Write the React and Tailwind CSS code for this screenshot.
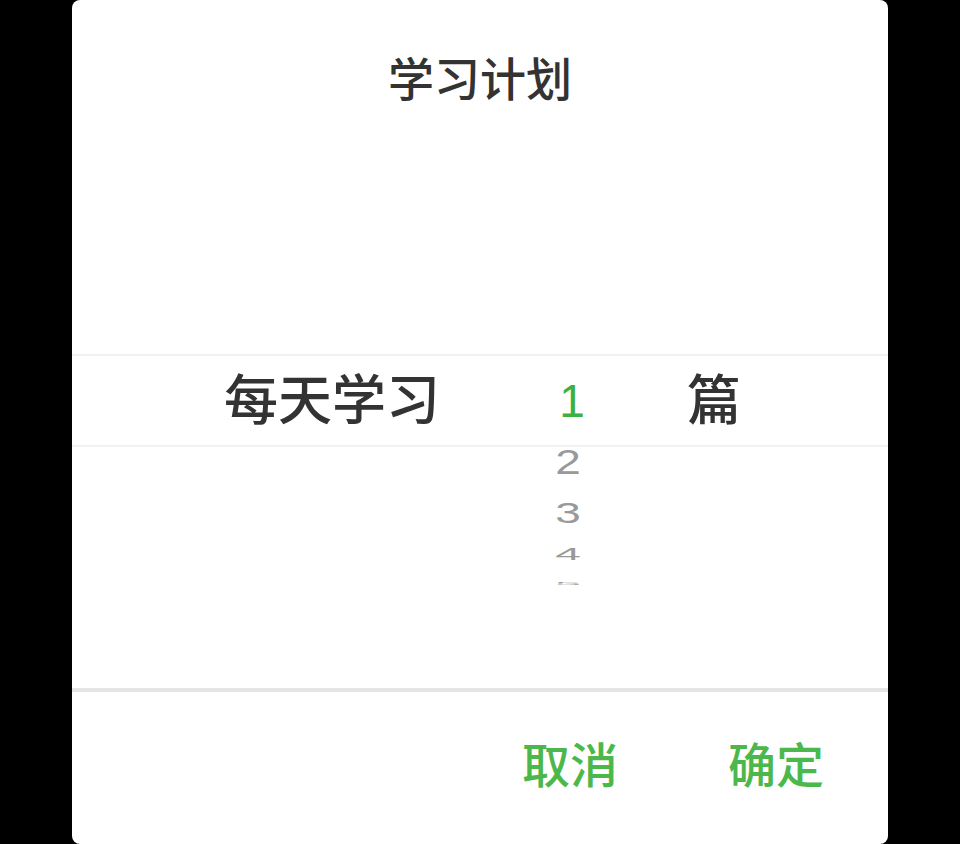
import React from "react";

const font = { fontFamily: '"Liberation Sans", "Noto Sans CJK SC", sans-serif' };

export default function App() {
  return (
    <div className="flex h-[844px] w-full justify-center bg-black" style={font}>
      <div className="flex h-[844px] w-[816px] flex-col overflow-hidden rounded-lg bg-white">
        <div className="flex h-[160px] items-center justify-center">
          <h1 className="text-[46px] font-medium leading-none text-[#333]">学习计划</h1>
        </div>

        <div className="flex h-[528px] flex-col">
          <div className="h-[194px]" />
          <div className="flex h-[93px] items-center border-y-2 border-[#f2f2f2]">
            <div className="w-[368px] text-right text-[54px] font-medium leading-none text-[#333]">每天学习</div>
            <div className="ml-[82px] w-[100px] text-center text-[46px] leading-none text-[#3cb043]">1</div>
            <div className="ml-[65px] text-[54px] font-medium leading-none text-[#333]">篇</div>
          </div>
          <div className="ml-[446px] flex w-[100px] flex-col items-center text-[46px] text-[#999]">
            <div className="flex h-[30px] scale-y-[0.75] items-center leading-none">2</div>
            <div className="flex h-[70px] scale-y-[0.66] items-center leading-none">3</div>
            <div className="flex h-[14px] scale-y-[0.36] items-center leading-none">4</div>
            <div className="flex h-[46px] scale-y-[0.09] items-center leading-none">5</div>
          </div>
        </div>

        <div className="h-[4px] bg-[#e5e5e5]" />
        <div className="flex flex-1 items-center justify-end gap-[110px] pr-[64px] pb-[2px]">
          <button className="text-[48px] font-medium leading-none text-[#4cb84c]">取消</button>
          <button className="text-[48px] font-medium leading-none text-[#4cb84c]">确定</button>
        </div>
      </div>
    </div>
  );
}
